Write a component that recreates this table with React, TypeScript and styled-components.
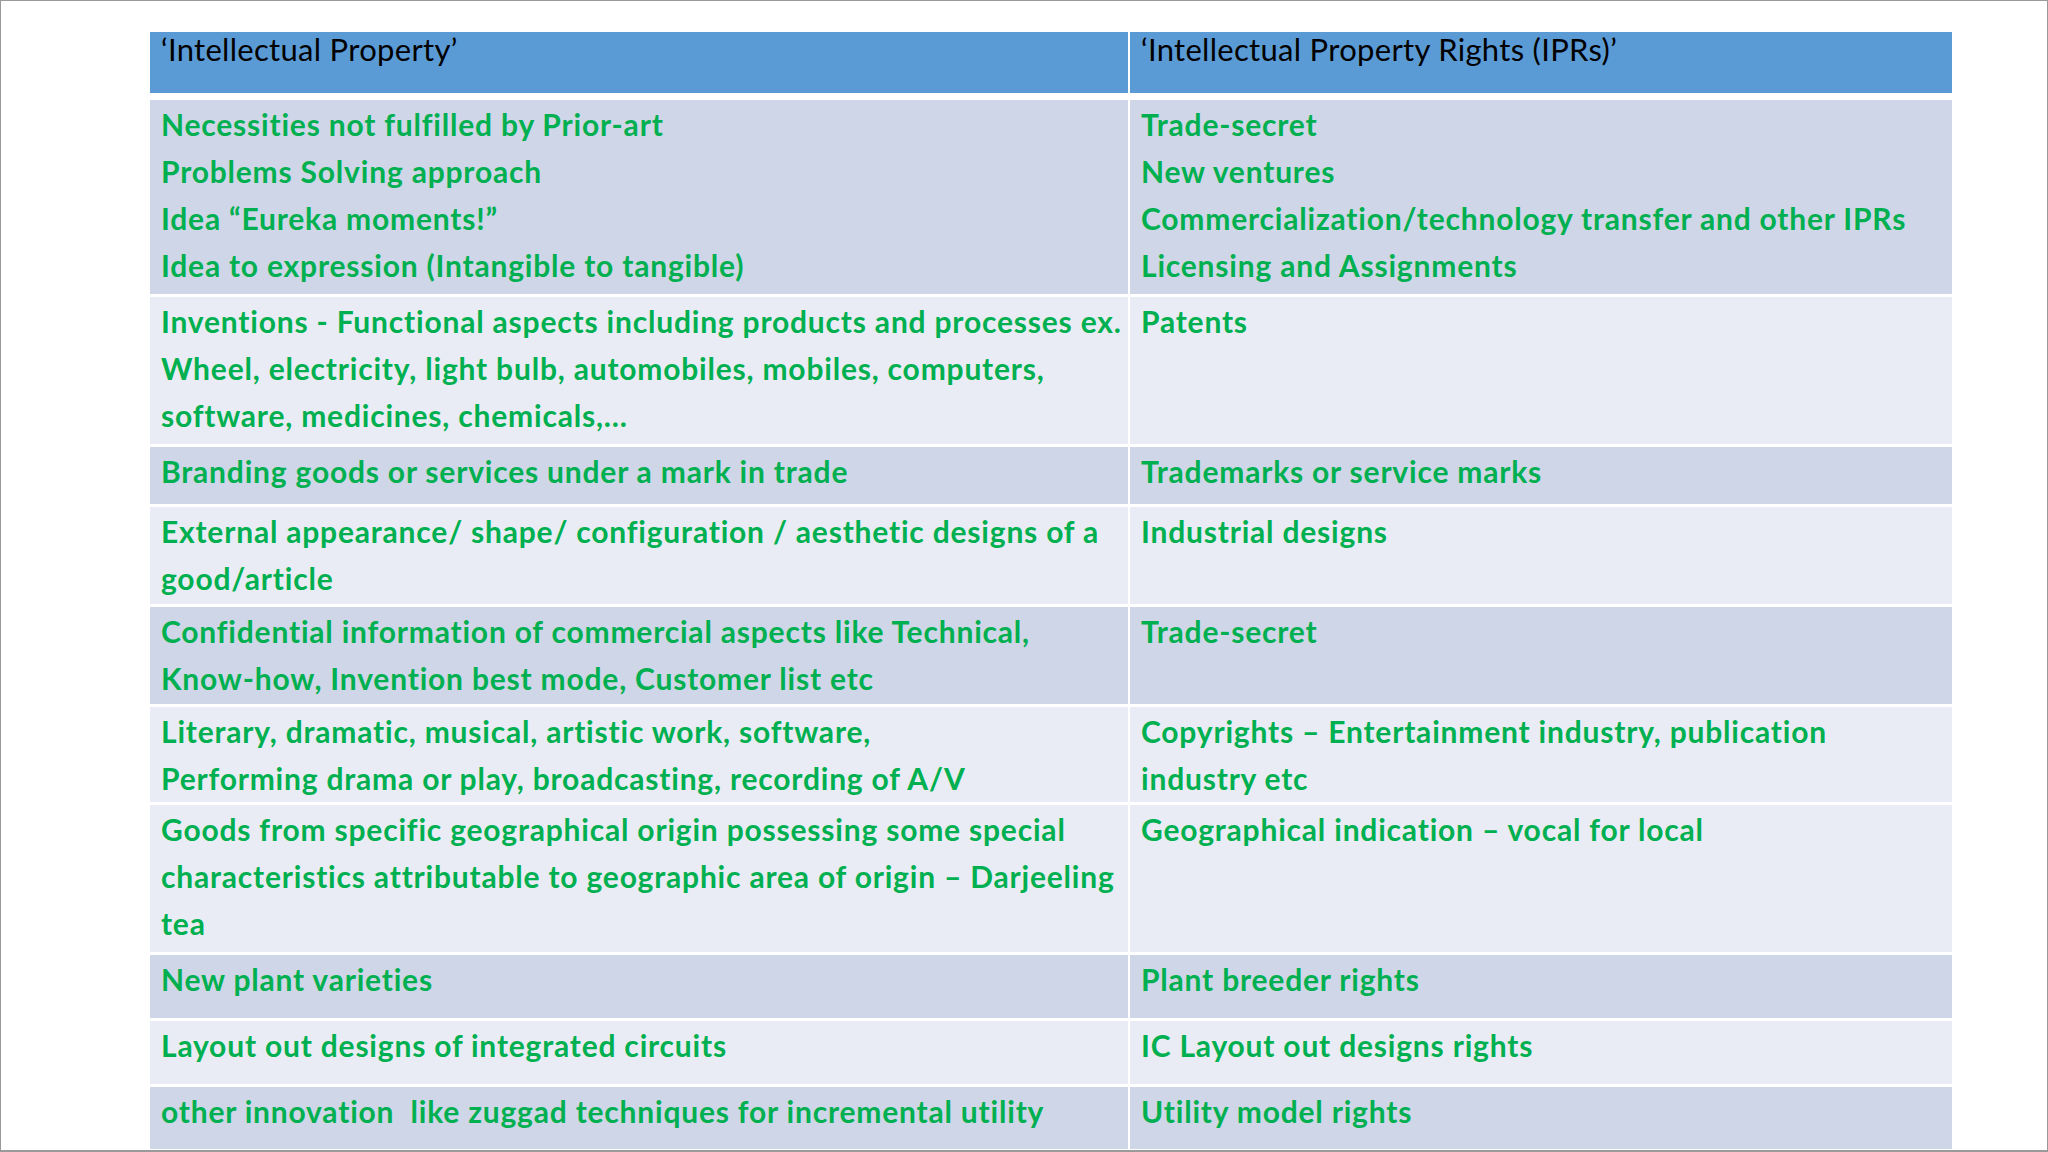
import styled, { createGlobalStyle } from "styled-components";

const GlobalStyle = createGlobalStyle`
  html, body {
    margin: 0;
    padding: 0;
    background: #ffffff;
  }
`;

type Band = "dark" | "light";

type IpRow = {
  left: string[];
  right: string[];
  height: number;
  band: Band;
};

const rows: IpRow[] = [
  {
    left: [
      "Necessities not fulfilled by Prior-art",
      "Problems Solving approach",
      "Idea “Eureka moments!”",
      "Idea to expression (Intangible to tangible)",
    ],
    right: [
      "Trade-secret",
      "New ventures",
      "Commercialization/technology transfer and other IPRs",
      "Licensing and Assignments",
    ],
    height: 194,
    band: "dark",
  },
  {
    left: [
      "Inventions - Functional aspects including products and processes ex.",
      "Wheel, electricity, light bulb, automobiles, mobiles, computers,",
      "software, medicines, chemicals,…",
    ],
    right: ["Patents"],
    height: 147,
    band: "light",
  },
  {
    left: ["Branding goods or services under a mark in trade"],
    right: ["Trademarks or service marks"],
    height: 57,
    band: "dark",
  },
  {
    left: [
      "External appearance/ shape/ configuration / aesthetic designs of a",
      "good/article",
    ],
    right: ["Industrial designs"],
    height: 97,
    band: "light",
  },
  {
    left: [
      "Confidential information of commercial aspects like Technical,",
      "Know-how, Invention best mode, Customer list etc",
    ],
    right: ["Trade-secret"],
    height: 97,
    band: "dark",
  },
  {
    left: [
      "Literary, dramatic, musical, artistic work, software,",
      "Performing drama or play, broadcasting, recording of A/V",
    ],
    right: ["Copyrights – Entertainment industry, publication", "industry etc"],
    height: 95,
    band: "light",
  },
  {
    left: [
      "Goods from specific geographical origin possessing some special",
      "characteristics attributable to geographic area of origin – Darjeeling",
      "tea",
    ],
    right: ["Geographical indication – vocal for local"],
    height: 147,
    band: "light",
  },
  {
    left: ["New plant varieties"],
    right: ["Plant breeder rights"],
    height: 63,
    band: "dark",
  },
  {
    left: ["Layout out designs of integrated circuits"],
    right: ["IC Layout out designs rights"],
    height: 63,
    band: "light",
  },
  {
    left: ["other innovation  like zuggad techniques for incremental utility"],
    right: ["Utility model rights"],
    height: 62,
    band: "dark",
  },
];

const Slide = styled.div`
  box-sizing: border-box;
  width: 2048px;
  height: 1152px;
  border: 1px solid #9a9a9a;
  border-bottom-width: 2px;
  padding: 31px 0 0 149px;
  background: #ffffff;
  font-family: "Lato", "Liberation Sans", sans-serif;
  overflow: hidden;
`;

const Table = styled.div`
  display: flex;
  flex-direction: column;
  gap: 3px;
  width: 1802px;
`;

const Row = styled.div<{ $height: number }>`
  display: grid;
  grid-template-columns: 978px 822px;
  column-gap: 2px;
  height: ${(p) => p.$height}px;
`;

const HeaderRow = styled(Row)`
  margin-bottom: 4px;
`;

const HeaderCell = styled.div`
  background: #5b9bd5;
  color: #000000;
  font-size: 31px;
  font-weight: 400;
  letter-spacing: 0.3px;
  line-height: 32px;
  padding: 1px 10px 0 11px;
  white-space: nowrap;
`;

const Cell = styled.div<{ $band: Band }>`
  background: ${(p) => (p.$band === "dark" ? "#cfd6e8" : "#e9ecf5")};
  color: #00b050;
  font-size: 30px;
  font-weight: 700;
  letter-spacing: 0.8px;
  line-height: 47px;
  padding: 1px 6px 0 11px;
  overflow: hidden;
`;

const Line = styled.div`
  white-space: pre;
`;

export default function App() {
  return (
    <>
      <GlobalStyle />
      <Slide>
        <Table>
          <HeaderRow $height={61}>
            <HeaderCell>‘Intellectual Property’</HeaderCell>
            <HeaderCell>‘Intellectual Property Rights (IPRs)’</HeaderCell>
          </HeaderRow>
          {rows.map((row, i) => (
            <Row key={i} $height={row.height}>
              <Cell $band={row.band}>
                {row.left.map((t, j) => (
                  <Line key={j}>{t}</Line>
                ))}
              </Cell>
              <Cell $band={row.band}>
                {row.right.map((t, j) => (
                  <Line key={j}>{t}</Line>
                ))}
              </Cell>
            </Row>
          ))}
        </Table>
      </Slide>
    </>
  );
}
